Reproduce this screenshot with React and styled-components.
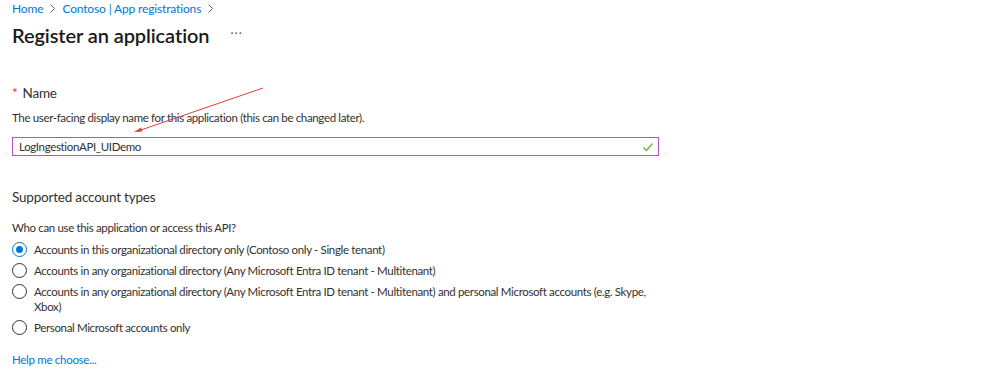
import React, { useState } from 'react';
import styled, { createGlobalStyle } from 'styled-components';

const blue = '#0078d4';
const text = '#323130';
const purple = '#b552cc';

const GlobalStyle = createGlobalStyle`
  body {
    margin: 0;
    background: #ffffff;
    font-family: Lato, "Open Sans", sans-serif;
    color: ${text};
  }
`;

const Page = styled.div`
  position: relative;
  width: 998px;
  height: 373px;
  padding: 0 12px;
  box-sizing: border-box;
  overflow: hidden;
`;

const Breadcrumb = styled.nav`
  display: flex;
  align-items: center;
  gap: 6px;
  height: 16px;
  font-size: 12px;
  letter-spacing: -0.15px;
`;

const Crumb = styled.a`
  color: ${blue};
  text-decoration: none;
`;

const Chevron = styled.svg`
  width: 7px;
  height: 9px;
`;

const TitleRow = styled.div`
  display: flex;
  align-items: center;
  gap: 21px;
  margin-top: 5px;
  height: 28px;
`;

const Title = styled.h1`
  margin: 0;
  font-size: 20px;
  font-weight: 600;
  letter-spacing: -0.1px;
  color: #1b1a19;
`;

const More = styled.span`
  font-size: 12px;
  color: #605e5c;
  letter-spacing: 1px;
  margin-top: -6px;
`;

const SectionLabel = styled.div`
  font-size: 13.5px;
  letter-spacing: -0.2px;
  color: ${text};
  margin-top: ${({ top }) => top}px;
  height: 20px;
  line-height: 20px;
`;

const Required = styled.span`
  color: #d13438;
  margin-right: 5px;
`;

const Hint = styled.div`
  font-size: 11.5px;
  letter-spacing: -0.35px;
  color: ${text};
  margin-top: ${({ top }) => top}px;
  line-height: 16px;
`;

const InputWrap = styled.div`
  position: relative;
  width: 647px;
  height: 19px;
  margin-top: 11px;
  border: 1px solid ${purple};
  box-sizing: border-box;
  display: flex;
  align-items: center;
`;

const Input = styled.input`
  border: none;
  outline: none;
  flex: 1;
  height: 100%;
  padding: 0 6px;
  font-family: inherit;
  font-size: 11.5px;
  letter-spacing: -0.35px;
  color: ${text};
  background: transparent;
`;

const Check = styled.svg`
  width: 12px;
  height: 12px;
  margin-right: 4px;
`;

const RadioList = styled.div`
  display: flex;
  flex-direction: column;
  margin-top: 6px;
  gap: 6px;
`;

const RadioRow = styled.label`
  display: flex;
  align-items: flex-start;
  gap: 7px;
  font-size: 11.5px;
  letter-spacing: -0.35px;
  line-height: 15px;
  color: ${text};
  max-width: 640px;
`;

const Circle = styled.span`
  flex: none;
  width: 15px;
  height: 15px;
  border-radius: 50%;
  border: 1px solid ${({ checked }) => (checked ? blue : '#323130')};
  box-sizing: border-box;
  display: flex;
  align-items: center;
  justify-content: center;
  &::after {
    content: '';
    width: 7px;
    height: 7px;
    border-radius: 50%;
    background: ${blue};
    display: ${({ checked }) => (checked ? 'block' : 'none')};
  }
`;

const HelpLink = styled.a`
  display: block;
  margin-top: 18px;
  font-size: 11.5px;
  letter-spacing: -0.3px;
  color: ${blue};
  text-decoration: none;
`;

const Arrow = styled.svg`
  position: absolute;
  left: 0;
  top: 0;
  width: 998px;
  height: 373px;
  pointer-events: none;
`;

const options = [
  'Accounts in this organizational directory only (Contoso only - Single tenant)',
  'Accounts in any organizational directory (Any Microsoft Entra ID tenant - Multitenant)',
  'Accounts in any organizational directory (Any Microsoft Entra ID tenant - Multitenant) and personal Microsoft accounts (e.g. Skype, Xbox)',
  'Personal Microsoft accounts only',
];

const ChevronIcon = () => (
  <Chevron viewBox="0 0 7 9">
    <path d="M1.5 0.5 L5.5 4.5 L1.5 8.5" fill="none" stroke="#605e5c" strokeWidth="1" />
  </Chevron>
);

export default function App() {
  const [name, setName] = useState('LogIngestionAPI_UIDemo');
  const [choice, setChoice] = useState(0);

  return (
    <Page>
      <GlobalStyle />
      <Breadcrumb>
        <Crumb href="#">Home</Crumb>
        <ChevronIcon />
        <Crumb href="#">Contoso | App registrations</Crumb>
        <ChevronIcon />
      </Breadcrumb>
      <TitleRow>
        <Title>Register an application</Title>
        <More>···</More>
      </TitleRow>

      <SectionLabel top={34}>
        <Required>*</Required>Name
      </SectionLabel>
      <Hint top={7}>The user-facing display name for this application (this can be changed later).</Hint>
      <InputWrap>
        <Input value={name} onChange={(e) => setName(e.target.value)} />
        <Check viewBox="0 0 12 12">
          <path d="M1.5 6.5 L4.5 9.5 L10.5 2.5" fill="none" stroke="#6bb33a" strokeWidth="1.3" />
        </Check>
      </InputWrap>

      <SectionLabel top={31}>Supported account types</SectionLabel>
      <Hint top={13}>Who can use this application or access this API?</Hint>
      <RadioList>
        {options.map((o, i) => (
          <RadioRow key={i} onClick={() => setChoice(i)}>
            <Circle checked={choice === i} />
            <span>{o}</span>
          </RadioRow>
        ))}
      </RadioList>
      <HelpLink href="#">Help me choose...</HelpLink>

      <Arrow viewBox="0 0 998 373">
        <line x1="263" y1="88" x2="138" y2="131" stroke="#e8393a" strokeWidth="1" />
        <polygon points="134,132 141,127.5 142.5,131.5" fill="#e8393a" />
      </Arrow>
    </Page>
  );
}
